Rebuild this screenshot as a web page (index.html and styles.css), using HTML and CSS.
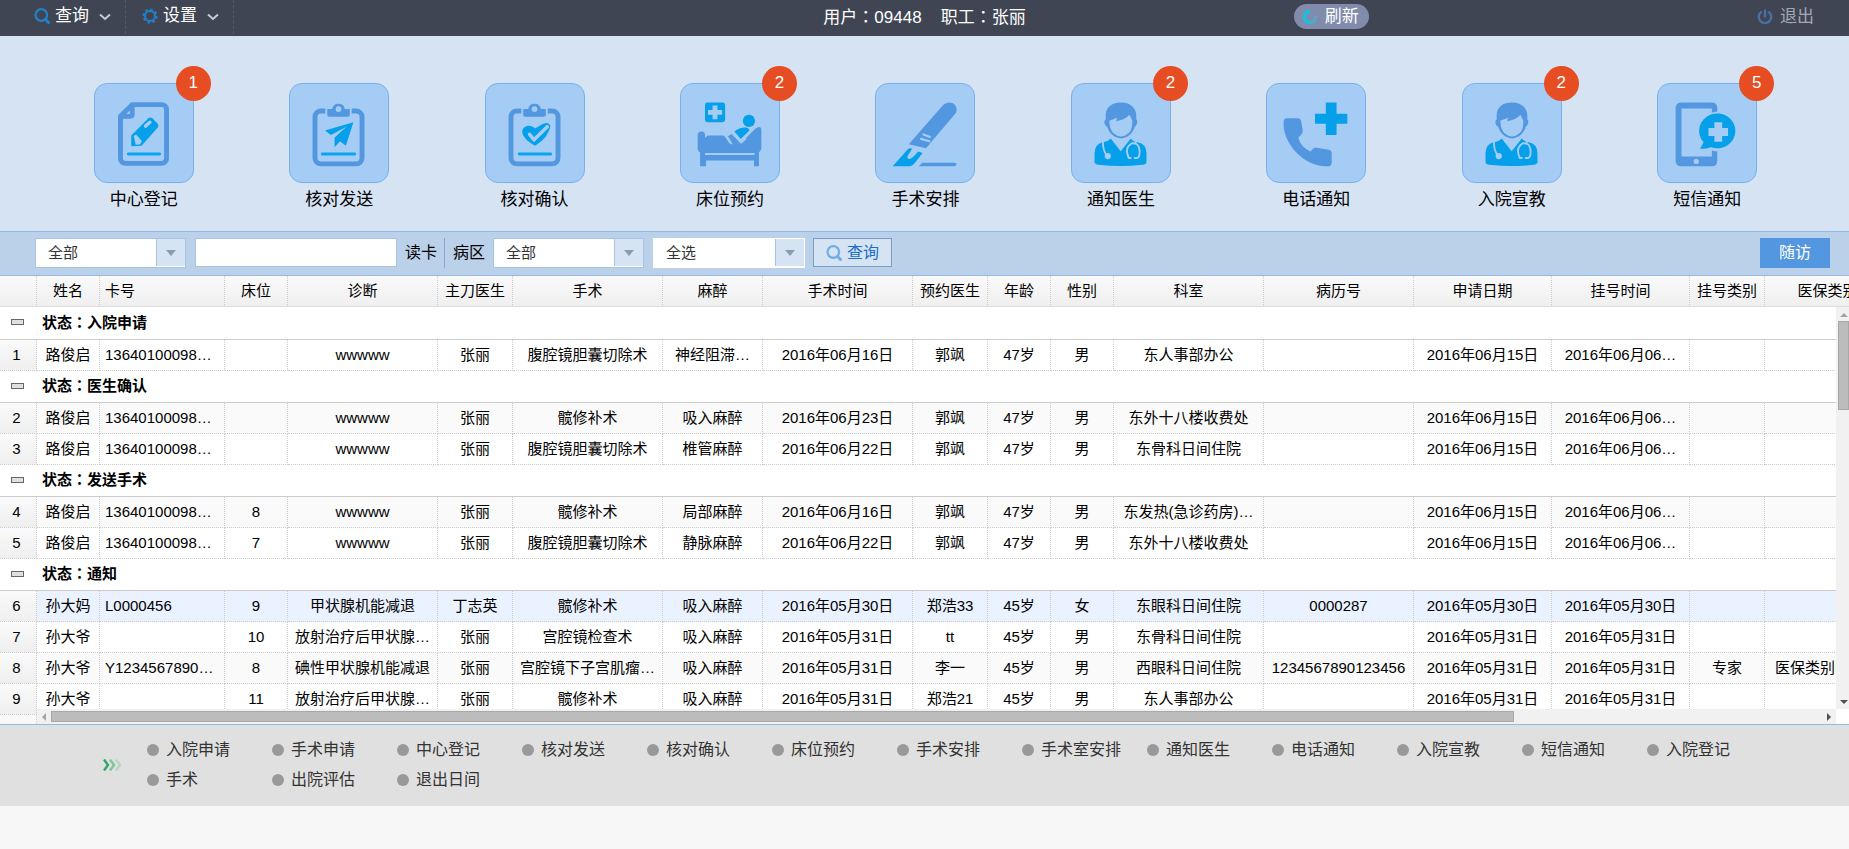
FILE: index.html
```html
<!DOCTYPE html>
<html lang="zh-CN">
<head>
<meta charset="utf-8">
<title>日间手术管理</title>
<link rel="stylesheet" href="styles.css">
</head>
<body>
<header class="topbar">
  <nav class="menu">
    <button class="menu-item" type="button">
      <svg class="menu-icon" viewBox="0 0 16 16" fill="none" stroke="#2380c8" stroke-width="2.2"><circle cx="7.3" cy="7" r="5.8"/><path d="M11.5 11.500l3 3" stroke-width="3" stroke-linecap="round"/></svg>
      查询
      <svg class="chevron" viewBox="0 0 12 8" fill="none" stroke="#c3cbd9" stroke-width="2"><path d="M1 1.500l5 4.500 5-4.500"/></svg>
    </button>
    <button class="menu-item" type="button">
      <svg class="menu-icon" viewBox="0 0 16 16" fill="none" stroke="#2380c8"><circle cx="8" cy="8" r="5" stroke-width="2"/><circle cx="8" cy="8" r="6.600" stroke-width="2" stroke-dasharray="2.600 2.580"/></svg>
      设置
      <svg class="chevron" viewBox="0 0 12 8" fill="none" stroke="#c3cbd9" stroke-width="2"><path d="M1 1.500l5 4.500 5-4.500"/></svg>
    </button>
  </nav>
  <div class="who"><span>用户<span class="colon" lang="zh-Hant">：</span>09448</span><span>职工<span class="colon" lang="zh-Hant">：</span>张丽</span></div>
  <div class="top-actions">
    <button class="refresh" type="button">
      <svg class="menu-icon" viewBox="0 0 16 16" fill="none" stroke-width="3.400"><path d="M8 2.500a5.500 5.500 0 0 0 0 11" stroke="#10c4e0"/><path d="M8 13.500a5.500 5.500 0 0 0 5.300-4" stroke="#4fa9c9"/><path d="M13.300 9.500a5.500 5.500 0 0 0 0-3" stroke="#6f9dbd"/></svg>
      刷新
    </button>
    <button class="logout" type="button">
      <svg class="menu-icon" viewBox="0 0 16 16" fill="none" stroke="#4a6ea5" stroke-width="2.400" stroke-linecap="round"><path d="M4 3.200a6.200 6.200 0 1 0 8 0M8 1.500v6"/></svg>
      退出
    </button>
  </div>
</header>

<nav class="launcher">
  <button class="app" type="button">
    <span class="tile">
      <svg viewBox="0 0 100 100"><path d="M38 21H68a5 5 0 0 1 5 5V76a5 5 0 0 1-5 5H31a5 5 0 0 1-5-5V33zV31a2 2 0 0 1-2 2H26" class="line"/><path d="M37 63.500V52.500L54.500 35q2-1.700 4 0L64 40.500q1.500 2 0 4L47.500 63z" class="hot"/><path d="M51.500 43l4.500-4" class="cut" stroke-width="3.500" stroke-linecap="round"/><path d="M39.500 53l2.500-1.500 6 7-2 3-4.500.5z" class="bg"/><path d="M34 71.500H66" class="hotline"/></svg>
      <span class="badge">1</span>
    </span>
    <span class="app-name">中心登记</span>
  </button>
  <button class="app" type="button">
    <span class="tile">
      <svg viewBox="0 0 100 100"><path d="M36 27.500H31.500a6 6 0 0 0-6 6V75.500a6 6 0 0 0 6 6H67.500a6 6 0 0 0 6-6V33.500a6 6 0 0 0-6-6H63" class="line"/><path d="M38 25.500h5a6.600 6.600 0 0 1 13 0h5v6a2 2 0 0 1-2 2H40a2 2 0 0 1-2-2z" class="base"/><circle cx="49.500" cy="25.500" r="2.900" class="bg"/><path d="M64.700 39L35.700 47.500l6 4.500 16-8.500L45.500 54.500V64.500l5.500-6 6 4.500z" class="hot"/><path d="M33 71.500H66" class="hotline"/></svg>
    </span>
    <span class="app-name">核对发送</span>
  </button>
  <button class="app" type="button">
    <span class="tile">
      <svg viewBox="0 0 100 100"><path d="M36 27.500H31.500a6 6 0 0 0-6 6V75.500a6 6 0 0 0 6 6H67.500a6 6 0 0 0 6-6V33.500a6 6 0 0 0-6-6H63" class="line"/><path d="M38 25.500h5a6.600 6.600 0 0 1 13 0h5v6a2 2 0 0 1-2 2H40a2 2 0 0 1-2-2z" class="base"/><circle cx="49.500" cy="25.500" r="2.900" class="bg"/><path d="M50 63C43 59 37 54 37 48.500C37 43 45 40 50 45.500L54 43Q63 37 65.500 42C66 45 63 50 61.500 53Q57 59 50 63z" class="hot"/><path d="M44.500 51.500l4.500 5.500L62.500 43.500" class="cut" stroke-width="3.600" stroke-linecap="round" stroke-linejoin="round"/><path d="M34 71.500H66" class="hotline"/></svg>
    </span>
    <span class="app-name">核对确认</span>
  </button>
  <button class="app" type="button">
    <span class="tile">
      <svg viewBox="0 0 100 100"><rect x="24.500" y="19" width="20.500" height="20" rx="2.500" class="hot"/><path d="M34.700 22v14M27.500 29h14.500" class="cut" stroke-width="5"/><ellipse cx="69.300" cy="37.700" rx="6.200" ry="6.300" class="hot"/><path d="M54.500 48.500Q60 44 66 44.500Q69.500 45 69.700 47.500L61 56z" class="hot"/><path d="M17 53q0-4.500 3.800-4.500t3.800 4.500v2l2.500-2.500H42.500q2 0 3 2l4 6H61L76 45.500q5.500-3.500 6 1V65q0 3-2.500 5V84H74.500V78H25.500V84H19.500V70Q17 68.500 17 66z" class="base"/><path d="M47.500 53.500l4-2.500L61.500 61H52.500z" class="base"/><path d="M45.500 54l5 7.500h2L48.500 54z" class="bg"/><path d="M52.500 50l9 10 5-4.500" class="cut" stroke-width="1.500"/><path d="M24.500 71.500H75" class="cut" stroke-width="2"/></svg>
      <span class="badge">2</span>
    </span>
    <span class="app-name">床位预约</span>
  </button>
  <button class="app" type="button">
    <span class="tile">
      <svg viewBox="0 0 100 100"><path d="M33.500 61.500L68.500 21.500C75 15 85 21 81.500 29.500L51 65.500Z" class="base"/><path d="M46 56l8.500 2.500M48.500 51.500l6.500 2.500" class="cut" stroke-width="2.200" stroke-linecap="round"/><path d="M17 84L32.500 66.500q1.500-1.500 4.500-.5L32.500 73Q31 76.500 34 76.500T43 69l4.500 1.500L40 80q-3 4-7 4z" class="hot"/><path d="M43.500 84l4-3.700H80q2 0 2 1.700t-2 2z" class="base"/></svg>
    </span>
    <span class="app-name">手术安排</span>
  </button>
  <button class="app" type="button">
    <span class="tile">
      <svg viewBox="0 0 100 100"><path d="M34.500 36C33 24 40 19 50 19S67 25 65.500 36C68 38 66 42 64 44C62 50 57 55.500 50 55.500S38 50 36 44C33 42 32 38 34.500 36z" class="base"/><path d="M38 37.500L46 34.500 45 38Q54 37 58.500 31.500L61.500 37Q62 46 58 50Q54 53.500 50 53.500T42 50Q38.500 46 38 37.500z" class="bg"/><path d="M39.500 55.500L49.700 68.500 60 55.500Q62 58.500 67 59.500Q76 61 76 71V80Q76 81.500 72 82.500Q50 85 27 82.500Q23 81.500 23 80V71Q23 61.500 31 59.500Q37 58.500 39.500 55.500z" class="hot"/><path d="M31.500 59q0 10 4.500 14M60 75.500h-2q-5-10 3-15 8-1 8 9 0 6-3 6h-2M65 61V57" class="cut" stroke-width="1.900" stroke-linecap="round"/><circle cx="36.500" cy="73.500" r="3.200" class="bg"/></svg>
      <span class="badge">2</span>
    </span>
    <span class="app-name">通知医生</span>
  </button>
  <button class="app" type="button">
    <span class="tile">
      <svg viewBox="0 0 100 100"><path d="M60 19H71V30.300H82V40.500H71V52H60V40.500H49V30.300H60z" class="hot"/><path d="M20 35H31q3.500 0 4 3.500L36.500 48q0 3-4.500 6.500Q34 64 44.500 69Q48 64 51 65L63 67q3 .5 3 4V80q0 4-4 4C38 85 15 60 17 38q.3-3 3-3z" class="base"/></svg>
    </span>
    <span class="app-name">电话通知</span>
  </button>
  <button class="app" type="button">
    <span class="tile">
      <svg viewBox="0 0 100 100"><path d="M34.500 36C33 24 40 19 50 19S67 25 65.500 36C68 38 66 42 64 44C62 50 57 55.500 50 55.500S38 50 36 44C33 42 32 38 34.500 36z" class="base"/><path d="M38 37.500L46 34.500 45 38Q54 37 58.500 31.500L61.500 37Q62 46 58 50Q54 53.500 50 53.500T42 50Q38.500 46 38 37.500z" class="bg"/><path d="M39.500 55.500L49.700 68.500 60 55.500Q62 58.500 67 59.500Q76 61 76 71V80Q76 81.500 72 82.500Q50 85 27 82.500Q23 81.500 23 80V71Q23 61.500 31 59.500Q37 58.500 39.500 55.500z" class="hot"/><path d="M31.500 59q0 10 4.500 14M60 75.500h-2q-5-10 3-15 8-1 8 9 0 6-3 6h-2M65 61V57" class="cut" stroke-width="1.900" stroke-linecap="round"/><circle cx="36.500" cy="73.500" r="3.200" class="bg"/></svg>
      <span class="badge">2</span>
    </span>
    <span class="app-name">入院宣教</span>
  </button>
  <button class="app" type="button">
    <span class="tile">
      <svg viewBox="0 0 100 100"><path d="M24 19H55q5.500 0 5.500 6V78q0 6-5.500 6H24q-6 0-6-6V25q0-6 6-6z" class="base"/><path d="M24 25H55V74H24z" class="bg"/><circle cx="39" cy="79" r="2.700" class="bg"/><circle cx="61.500" cy="48.500" r="20.500" class="bg"/><path d="M43 66l3.500-6.500A18.500 17.800 0 1 1 54 64.500Q48 66.500 43 66z" class="hot"/><path d="M61.500 39v20M51.500 49h20" class="cut" stroke-width="8"/></svg>
      <span class="badge">5</span>
    </span>
    <span class="app-name">短信通知</span>
  </button>
</nav>

<form class="filters">
  <span class="combo"><select aria-label="类型"><option>全部</option></select></span>
  <input class="keyword" type="text" aria-label="卡号">
  <button class="read-card" type="button">读卡</button>
  <label class="ward" for="ward">病区</label>
  <span class="combo"><select id="ward"><option>全部</option></select></span>
  <span class="combo combo-plain"><select aria-label="状态"><option>全选</option></select></span>
  <button class="search" type="button">
    <svg class="menu-icon" viewBox="0 0 16 16" fill="none" stroke="#6faee8" stroke-width="2.200"><circle cx="7.300" cy="7" r="5.800"/><path d="M11.500 11.500l3 3" stroke-width="3" stroke-linecap="round"/></svg>
    查询
  </button>
  <button class="follow" type="button">随访</button>
</form>

<section class="datagrid">
  <div class="frozen">
    <table class="numbers">
      <thead><tr><th></th></tr></thead>
      <tbody>
        <tr class="group"><td><button class="fold" type="button" aria-label="收起"></button></td></tr>
        <tr><td>1</td></tr>
        <tr class="group"><td><button class="fold" type="button" aria-label="收起"></button></td></tr>
        <tr><td>2</td></tr>
        <tr><td>3</td></tr>
        <tr class="group"><td><button class="fold" type="button" aria-label="收起"></button></td></tr>
        <tr><td>4</td></tr>
        <tr><td>5</td></tr>
        <tr class="group"><td><button class="fold" type="button" aria-label="收起"></button></td></tr>
        <tr><td>6</td></tr>
        <tr><td>7</td></tr>
        <tr><td>8</td></tr>
        <tr><td>9</td></tr>
        <tr><td></td></tr>
      </tbody>
    </table>
  </div>
  <div class="main">
    <div class="head">
      <table class="rows">
        <colgroup><col class="w-s"><col class="w-card"><col class="w-s"><col class="w-l"><col class="w-m"><col class="w-l"><col class="w-an"><col class="w-l"><col class="w-m"><col class="w-s"><col class="w-s"><col class="w-l"><col class="w-l"><col class="w-date"><col class="w-date"><col class="w-m"><col class="w-ins"></colgroup>
        <thead><tr><th>姓名</th><th class="left">卡号</th><th>床位</th><th>诊断</th><th>主刀医生</th><th>手术</th><th>麻醉</th><th>手术时间</th><th>预约医生</th><th>年龄</th><th>性别</th><th>科室</th><th>病历号</th><th>申请日期</th><th>挂号时间</th><th>挂号类别</th><th>医保类别</th></tr></thead>
      </table>
    </div>
    <div class="view">
      <div class="body">
        <table class="rows">
          <colgroup><col class="w-s"><col class="w-card"><col class="w-s"><col class="w-l"><col class="w-m"><col class="w-l"><col class="w-an"><col class="w-l"><col class="w-m"><col class="w-s"><col class="w-s"><col class="w-l"><col class="w-l"><col class="w-date"><col class="w-date"><col class="w-m"><col class="w-ins"></colgroup>
          <tbody>
            <tr class="group"><td colspan="17">状态<span class="colon" lang="zh-Hant">：</span>入院申请</td></tr>
            <tr><td>路俊启</td><td class="left">13640100098…</td><td></td><td>wwwww</td><td>张丽</td><td>腹腔镜胆囊切除术</td><td>神经阻滞…</td><td>2016年06月16日</td><td>郭飒</td><td>47岁</td><td>男</td><td>东人事部办公</td><td></td><td>2016年06月15日</td><td>2016年06月06…</td><td></td><td></td></tr>
            <tr class="group"><td colspan="17">状态<span class="colon" lang="zh-Hant">：</span>医生确认</td></tr>
            <tr class="alt"><td>路俊启</td><td class="left">13640100098…</td><td></td><td>wwwww</td><td>张丽</td><td>髋修补术</td><td>吸入麻醉</td><td>2016年06月23日</td><td>郭飒</td><td>47岁</td><td>男</td><td>东外十八楼收费处</td><td></td><td>2016年06月15日</td><td>2016年06月06…</td><td></td><td></td></tr>
            <tr><td>路俊启</td><td class="left">13640100098…</td><td></td><td>wwwww</td><td>张丽</td><td>腹腔镜胆囊切除术</td><td>椎管麻醉</td><td>2016年06月22日</td><td>郭飒</td><td>47岁</td><td>男</td><td>东骨科日间住院</td><td></td><td>2016年06月15日</td><td>2016年06月06…</td><td></td><td></td></tr>
            <tr class="group"><td colspan="17">状态<span class="colon" lang="zh-Hant">：</span>发送手术</td></tr>
            <tr class="alt"><td>路俊启</td><td class="left">13640100098…</td><td>8</td><td>wwwww</td><td>张丽</td><td>髋修补术</td><td>局部麻醉</td><td>2016年06月16日</td><td>郭飒</td><td>47岁</td><td>男</td><td>东发热(急诊药房)…</td><td></td><td>2016年06月15日</td><td>2016年06月06…</td><td></td><td></td></tr>
            <tr><td>路俊启</td><td class="left">13640100098…</td><td>7</td><td>wwwww</td><td>张丽</td><td>腹腔镜胆囊切除术</td><td>静脉麻醉</td><td>2016年06月22日</td><td>郭飒</td><td>47岁</td><td>男</td><td>东外十八楼收费处</td><td></td><td>2016年06月15日</td><td>2016年06月06…</td><td></td><td></td></tr>
            <tr class="group"><td colspan="17">状态<span class="colon" lang="zh-Hant">：</span>通知</td></tr>
            <tr class="hover"><td>孙大妈</td><td class="left">L0000456</td><td>9</td><td>甲状腺机能减退</td><td>丁志英</td><td>髋修补术</td><td>吸入麻醉</td><td>2016年05月30日</td><td>郑浩33</td><td>45岁</td><td>女</td><td>东眼科日间住院</td><td>0000287</td><td>2016年05月30日</td><td>2016年05月30日</td><td></td><td></td></tr>
            <tr><td>孙大爷</td><td class="left"></td><td>10</td><td>放射治疗后甲状腺…</td><td>张丽</td><td>宫腔镜检查术</td><td>吸入麻醉</td><td>2016年05月31日</td><td>tt</td><td>45岁</td><td>男</td><td>东骨科日间住院</td><td></td><td>2016年05月31日</td><td>2016年05月31日</td><td></td><td></td></tr>
            <tr class="alt"><td>孙大爷</td><td class="left">Y1234567890…</td><td>8</td><td>碘性甲状腺机能减退</td><td>张丽</td><td>宫腔镜下子宫肌瘤…</td><td>吸入麻醉</td><td>2016年05月31日</td><td>李一</td><td>45岁</td><td>男</td><td>西眼科日间住院</td><td>1234567890123456</td><td>2016年05月31日</td><td>2016年05月31日</td><td>专家</td><td>医保类别医保类</td></tr>
            <tr><td>孙大爷</td><td class="left"></td><td>11</td><td>放射治疗后甲状腺…</td><td>张丽</td><td>髋修补术</td><td>吸入麻醉</td><td>2016年05月31日</td><td>郑浩21</td><td>45岁</td><td>男</td><td>东人事部办公</td><td></td><td>2016年05月31日</td><td>2016年05月31日</td><td></td><td></td></tr>
          </tbody>
        </table>
      </div>
      <div class="vbar"><i class="tri up"></i><div class="vtrack"><div class="vthumb"></div></div><i class="tri down"></i></div>
      <div class="hbar"><i class="tri prev"></i><div class="htrack"><div class="hthumb"></div></div><i class="tri next"></i></div>
    </div>
  </div>
</section>

<footer class="legend">
  <svg class="arrows" viewBox="0 0 18 12" fill="none" stroke-width="2.400"><path d="M1 .5l4 5.500-4 5.500" stroke="#2fa866"/><path d="M7 .5l4 5.500-4 5.500" stroke="#7fc49e"/><path d="M13 .5l4 5.500-4 5.500" stroke="#b9d5c5"/></svg>
  <ul class="states">
    <li>入院申请</li><li>手术申请</li><li>中心登记</li><li>核对发送</li><li>核对确认</li><li>床位预约</li><li>手术安排</li><li>手术室安排</li><li>通知医生</li><li>电话通知</li><li>入院宣教</li><li>短信通知</li><li>入院登记</li><li>手术</li><li>出院评估</li><li>退出日间</li>
  </ul>
</footer>
</body>
</html>
```
FILE: styles.css
```css
* {
  box-sizing: border-box;
}

body {
  margin: 0;
  background: #f7f7f7;
  color: #000;
  font: 15px/20px "Liberation Sans", "Noto Sans CJK SC", sans-serif;
  overflow-x: hidden;
}

button,
input,
select {
  margin: 0;
  padding: 0;
  border: 0;
  border-radius: 0;
  background: none;
  color: inherit;
  font: inherit;
}

.colon {
  font-family: "Noto Sans CJK TC", sans-serif;
}

/* top bar */
.topbar {
  display: grid;
  grid-template-columns: 1fr auto 1fr;
  height: 36px;
  padding: 0 35px 0 18px;
  background: #404554;
  color: #fff;
  font-size: 17px;
  line-height: 32px;
}

.menu {
  display: flex;
}

.menu-item {
  display: flex;
  align-items: center;
  height: 34px;
  padding: 0 14px 2px 16px;
  border-right: 1px dashed #545968;
}

.menu-icon {
  flex: none;
  width: 16px;
  height: 16px;
  margin-right: 4px;
}

.menu-item .menu-icon {
  margin-right: 5px;
}

.chevron {
  width: 12px;
  height: 8px;
  margin: 2px 0 0 10px;
}

.who {
  display: flex;
  gap: 19px;
  padding-left: 17px;
}

.top-actions {
  display: flex;
  justify-content: space-between;
  padding-left: 268px;
}

.refresh {
  display: flex;
  align-items: center;
  height: 25px;
  margin-top: 4px;
  padding: 0 10px 0 8px;
  border-radius: 13px;
  background: #818cad;
  line-height: 25px;
}

.refresh .menu-icon {
  margin-right: 7px;
}

.logout {
  display: flex;
  align-items: center;
  height: 34px;
  color: #a4a8b3;
}

.logout .menu-icon {
  margin-right: 7px;
}

/* launcher */
.launcher {
  display: flex;
  padding: 47px 44px 17px 46px;
  background: #d6e3f3;
}

.app {
  display: flex;
  flex: 1;
  flex-direction: column;
  align-items: center;
}

.tile {
  position: relative;
  width: 100px;
  height: 100px;
  border: 1px solid #78b0ee;
  border-radius: 13px;
  background: #a5ccf5;
}

.tile svg {
  display: block;
  width: 98px;
  height: 98px;
}

.base {
  fill: #5297e0;
}

.hot {
  fill: #06a0ea;
}

.bg {
  fill: #a5ccf5;
}

.line {
  fill: none;
  stroke: #5297e0;
  stroke-width: 5;
}

.hotline {
  stroke: #0aa5ee;
  stroke-width: 3;
  stroke-linecap: round;
}

.cut {
  fill: none;
  stroke: #a5ccf5;
}

.badge {
  position: absolute;
  top: -18px;
  right: -18px;
  width: 35px;
  height: 35px;
  border-radius: 50%;
  background: #e74d22;
  color: #fff;
  font-size: 17px;
  line-height: 34px;
}

.app-name {
  font-size: 17px;
  line-height: 31px;
  padding-top: 1px;
  margin-bottom: -1px;
}

/* filters */
.filters {
  display: flex;
  padding: 6px 19px 7px 35px;
  border-top: 1px solid #95b8e7;
  border-bottom: 1px solid #95b8e7;
  background: #bbd1e9;
}

.combo {
  position: relative;
  width: 151px;
  height: 30px;
  border: 1px solid #a9c3e3;
  background: #fff;
}

.combo-plain {
  width: 152px;
  margin-left: 9px;
  border-color: #fff;
}

.combo select {
  width: 100%;
  height: 27px;
  padding-left: 12px;
  appearance: none;
  color: #333;
}

.combo::before {
  content: "";
  position: absolute;
  top: 0;
  right: 0;
  width: 28px;
  height: 27px;
  border-left: 1px solid #a9c3e3;
  background: #d6e3f3;
  pointer-events: none;
}

.combo::after {
  content: "";
  position: absolute;
  top: 11px;
  right: 9px;
  border: 5px solid transparent;
  border-top: 6px solid #8a9cb4;
  border-bottom: 0;
  pointer-events: none;
}

.keyword {
  width: 202px;
  height: 29px;
  margin-left: 9px;
  padding: 0 6px;
  border: 1px solid #a9c3e3;
  background: #fff;
}

.read-card,
.ward,
.search,
.follow {
  font-size: 16px;
  line-height: 30px;
}

.read-card {
  padding: 0 7px 0 8px;
}

.ward {
  height: 30px;
  padding: 0 8px;
  border-left: 1px solid #8ba5cc;
}

.search {
  display: flex;
  align-items: center;
  height: 29px;
  margin-left: 8px;
  padding: 0 12px;
  border: 1px solid #7a9cc6;
  background: #d6e3f3;
  color: #1b6fc8;
}

.search .menu-icon {
  margin-right: 5px;
}

.follow {
  width: 70px;
  height: 30px;
  margin-left: auto;
  background: #5297e0;
  color: #fff;
}

/* data grid */
.datagrid {
  display: grid;
  grid-template-columns: 37px minmax(0, 1fr);
  height: 449px;
  border-bottom: 1px solid #95b8e7;
  background: #fff;
  overflow: hidden;
}

.frozen,
.head,
.body {
  overflow: hidden;
}

table {
  border-collapse: separate;
  border-spacing: 0;
  table-layout: fixed;
}

th,
td {
  height: 31px;
  padding: 0 5px;
  border-right: 1px dotted #ccc;
  border-bottom: 1px dotted #ccc;
  font-weight: normal;
  text-align: center;
  white-space: nowrap;
  overflow: hidden;
  text-overflow: ellipsis;
}

th {
  border-bottom: 1px solid #ddd;
  background: linear-gradient(#fafafa, #efefef);
}

.left {
  text-align: left;
}

.numbers {
  width: 37px;
}

.numbers td {
  padding: 0 8px 1px 5px;
  background: linear-gradient(#fafafa, #efefef);
}

.rows {
  width: 1854px;
}

.w-s { width: 63px; }
.w-m { width: 75px; }
.w-an { width: 100px; }
.w-card { width: 125px; }
.w-date { width: 138px; }
.w-l { width: 150px; }
.w-ins { width: 126px; }

.group td {
  height: 32px;
  padding-bottom: 2px;
  border-right: 0;
  border-bottom: 1px solid #ccc;
  background: #fff;
  font-weight: bold;
  text-align: left;
}

.numbers tbody tr:first-child td,
.rows tbody tr:first-child td {
  height: 33px;
}

.alt td {
  background: #fafafa;
}

.hover td {
  background: #eaf2ff;
}

.fold {
  display: block;
  width: 13px;
  height: 6px;
  margin-left: 6px;
  border: 1px solid #666;
  background: #e0e0e0;
}

/* scroll area */
.view {
  display: grid;
  grid-template-columns: minmax(0, 1fr) 13px;
  grid-template-rows: 402px 15px;
}

.vbar {
  display: flex;
  flex-direction: column;
  align-items: center;
  padding: 6px 0 5px 2px;
  background: #f1f1f1;
}

.vtrack {
  flex: 1;
  width: 100%;
  margin: 4px 0;
}

.vthumb {
  height: 23.6%;
  border: 1px solid #a8a8a8;
  background: #bcbcbc;
}

.hbar {
  display: flex;
  align-items: center;
  padding: 0 5px;
  background: #f1f1f1;
}

.htrack {
  flex: 1;
  margin: 0 5px;
}

.hthumb {
  width: 82.6%;
  height: 11px;
  border: 1px solid #a8a8a8;
  background: #bcbcbc;
}

.tri {
  border: 4px solid transparent;
}

.up {
  border-top: 0;
  border-bottom-color: #a3a3a3;
}

.down {
  border-bottom: 0;
  border-top-color: #505050;
}

.prev {
  border-left: 0;
  border-right-color: #a3a3a3;
}

.next {
  border-right: 0;
  border-left-color: #505050;
}

/* legend */
.legend {
  display: flex;
  align-items: center;
  gap: 26px;
  padding: 10px 0 11px 103px;
  background: #e0e0e0;
  color: #333;
  font-size: 16px;
  line-height: 30px;
}

.arrows {
  flex: none;
  width: 18px;
  height: 12px;
}

.states {
  display: grid;
  flex: 1;
  grid-template-columns: repeat(auto-fill, 125px);
  margin: 0;
  padding: 0;
  list-style: none;
}

.states li {
  display: flex;
  align-items: center;
  gap: 7px;
}

.states li::before {
  content: "";
  width: 12px;
  height: 12px;
  margin-bottom: 1px;
  border-radius: 50%;
  background: #999;
}
```
